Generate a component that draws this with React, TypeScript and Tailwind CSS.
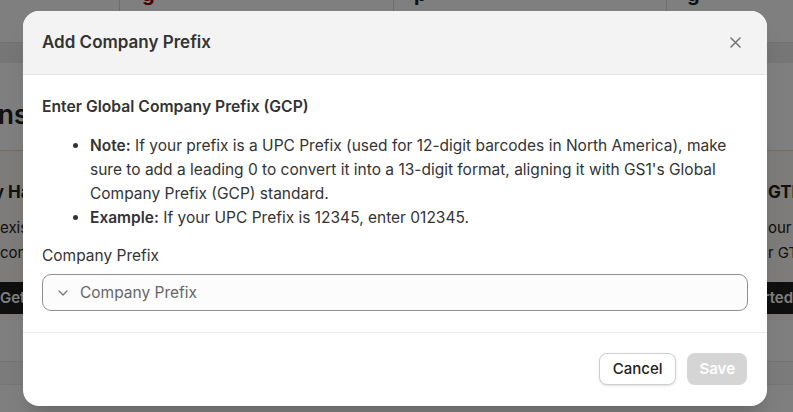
import React from "react"

const font = { fontFamily: "Inter, 'Noto Sans', sans-serif" }

function Backdrop() {
    return <div className="h-[412px] overflow-hidden bg-white text-[#222]">
        <div className="flex h-[43px] border-b border-[#e4e4e4]">
            <div className="w-[120px] border-r border-[#dcdcdc]" />
            <div className="w-[274px] border-r border-[#dcdcdc] pl-[22px]">
                <span className="-mt-[21px] block text-[20px] font-bold text-[#8b0000]">g</span>
            </div>
            <div className="w-[273px] border-r border-[#dcdcdc] pl-[20px]">
                <span className="-mt-[21px] block text-[20px] font-bold">p</span>
            </div>
            <div className="flex-1 pl-[20px]">
                <span className="-mt-[21px] block text-[20px] font-bold">g</span>
            </div>
        </div>
        <div className="h-[20px] bg-[#ececec]" />
        <div className="h-[87px] pt-[37px]">
            <div className="-ml-[70px] text-[26px] font-semibold leading-[30px]">Options</div>
        </div>
        <div className="flex h-[170px] justify-between border-t border-[#efd2bc] bg-[#fdf9f5]">
            <div className="w-[200px] pt-[30px]">
                <div className="-ml-[61px] whitespace-nowrap text-[17px] font-bold leading-[22px]">Already Have a Prefix</div>
                <div className="mt-[12px] whitespace-nowrap text-[15px] leading-[25px]">existing GS1 prefix<br />company details</div>
                <div className="-ml-[14px] mt-[17px] flex h-[32px] w-[130px] items-center rounded-[6px] bg-[#1e1e1e] px-[14px] text-[15px] font-semibold text-white">Get started</div>
            </div>
            <div className="-mr-[80px] w-[106px] pt-[30px] pl-[1px]">
                <div className="text-[17px] font-bold leading-[22px]">GTINs</div>
                <div className="mt-[12px] whitespace-nowrap text-[15px] leading-[25px]">our prefix<br />r GTINs</div>
                <div className="-ml-[70px] mt-[17px] flex h-[32px] items-center rounded-[6px] bg-[#1e1e1e] px-[14px] text-[15px] font-semibold text-white">Get started</div>
            </div>
        </div>
        <div className="h-[42px] border-b border-[#e8e8e8]" />
        <div className="h-[23px] border-b border-[#ececec] bg-[#f6f6f6]" />
    </div>
}

function Modal() {
    return <div className="w-[744px] overflow-hidden rounded-[16px] bg-white shadow-xl text-[#333]">
        <div className="flex h-[64px] items-center justify-between border-b border-[#e5e5e5] bg-[#f3f3f3] px-[19px]">
            <h2 className="text-[17px] font-semibold">Add Company Prefix</h2>
            <button className="mr-[7px] text-[#777]">
                <svg width="11" height="11" viewBox="0 0 11 11" fill="none" stroke="currentColor" strokeWidth="1.6" strokeLinecap="round">
                    <path d="M1 1l9 9M10 1l-9 9" />
                </svg>
            </button>
        </div>
        <div className="border-b border-[#ececec] px-[19px] pt-[20px] pb-[21px]">
            <h3 className="text-[15.7px] font-semibold leading-[23px]">Enter Global Company Prefix (GCP)</h3>
            <ul className="mt-[16px] list-disc pl-[48px] text-[15.5px] leading-[24px]">
                <li><b className="font-semibold">Note:</b> If your prefix is a UPC Prefix (used for 12-digit barcodes in North America), make sure to add a leading 0 to convert it into a 13-digit format, aligning it with GS1's Global Company Prefix (GCP) standard.</li>
                <li><b className="font-semibold">Example:</b> If your UPC Prefix is 12345, enter 012345.</li>
            </ul>
            <label className="mt-[14px] block text-[15.5px] leading-[24px]">Company Prefix</label>
            <button className="mt-[6px] flex h-[37px] w-full items-center gap-[12px] rounded-[9px] border border-[#8f8f8f] bg-[#fcfcfc] pl-[15px] text-[15.5px] text-[#666]">
                <svg width="10" height="6" viewBox="0 0 10 6" fill="none" stroke="#777" strokeWidth="1.3" strokeLinecap="round" strokeLinejoin="round">
                    <path d="M1 1l4 4 4-4" />
                </svg>
                Company Prefix
            </button>
        </div>
        <div className="flex justify-end gap-[11px] px-[20px] pt-[20px] pb-[21px]">
            <button className="h-[32px] rounded-[8px] border border-[#cfcfcf] bg-white px-[13px] text-[15px] font-medium text-[#222] shadow-sm">Cancel</button>
            <button className="h-[32px] rounded-[8px] bg-[#d5d5d5] px-[12px] text-[15px] font-semibold text-white">Save</button>
        </div>
    </div>
}

export default function App() {
    return <div className="relative h-[412px] w-[793px] overflow-hidden" style={font}>
        <Backdrop />
        <div className="absolute inset-0 flex items-start justify-center bg-black/50 pt-[11px] pr-[3px]">
            <Modal />
        </div>
    </div>
}
